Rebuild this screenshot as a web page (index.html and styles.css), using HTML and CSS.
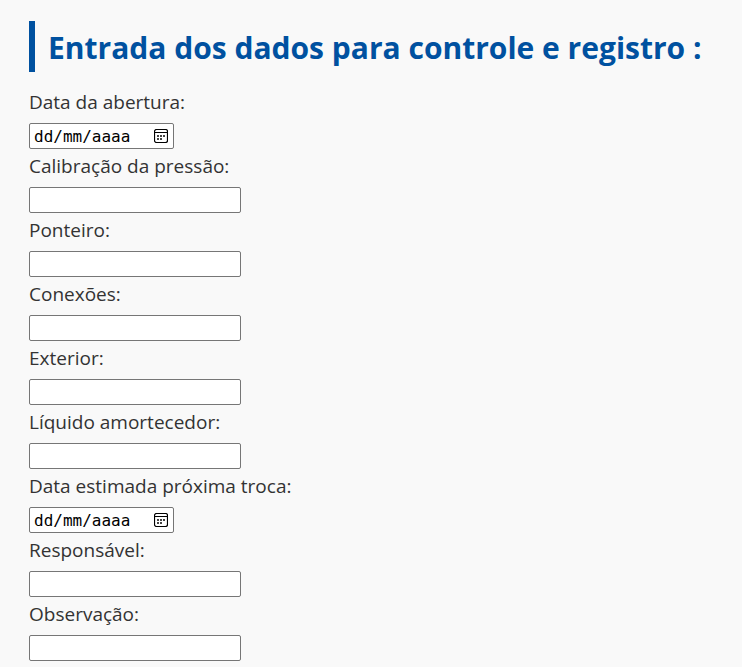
FILE: index.html
```html
<!DOCTYPE html>
<html lang="pt-BR">
<head>
<meta charset="utf-8">
<meta name="viewport" content="width=device-width, initial-scale=1">
<title>Controle e registro</title>
<link rel="stylesheet" href="styles.css">
</head>
<body>
<svg class="symbols" aria-hidden="true">
  <symbol id="calendar" viewBox="0 0 14 14">
    <rect x="0.5" y="0.5" width="13" height="13" rx="2" fill="none" stroke="currentColor" stroke-width="1.2"/>
    <path d="M1 3.5h12" stroke="currentColor"/>
    <path d="M6 6h2v2H6zM9 6h2v2H9zM3 6h2v2H3zM3 9h2v2H3zM6 9h2v2H6z" fill="#444"/>
  </symbol>
</svg>
<main class="page">
  <h1 class="title">Entrada dos dados para controle e registro :</h1>
  <form class="form">
    <div class="field">
      <label for="abertura">Data da abertura:</label>
      <div class="date">
        <input id="abertura" type="text" placeholder="dd/mm/aaaa">
        <button type="button" aria-label="Abrir calendário"><svg><use href="#calendar"/></svg></button>
      </div>
    </div>
    <div class="field"><label for="pressao">Calibração da pressão:</label><input class="text" id="pressao" type="text"></div>
    <div class="field"><label for="ponteiro">Ponteiro:</label><input class="text" id="ponteiro" type="text"></div>
    <div class="field"><label for="conexoes">Conexões:</label><input class="text" id="conexoes" type="text"></div>
    <div class="field"><label for="exterior">Exterior:</label><input class="text" id="exterior" type="text"></div>
    <div class="field"><label for="liquido">Líquido amortecedor:</label><input class="text" id="liquido" type="text"></div>
    <div class="field">
      <label for="troca">Data estimada próxima troca:</label>
      <div class="date">
        <input id="troca" type="text" placeholder="dd/mm/aaaa">
        <button type="button" aria-label="Abrir calendário"><svg><use href="#calendar"/></svg></button>
      </div>
    </div>
    <div class="field"><label for="responsavel">Responsável:</label><input class="text" id="responsavel" type="text"></div>
    <div class="field"><label for="observacao">Observação:</label><input class="text" id="observacao" type="text"></div>
  </form>
</main>
</body>
</html>
```
FILE: styles.css
```css
* {
  box-sizing: border-box;
}

body {
  margin: 0;
  background: #f9f9f9;
  color: #333;
  font: 19px/26px "Open Sans", "Noto Sans", sans-serif;
}

.symbols {
  display: none;
}

.page {
  padding: 21px 29px 0;
}

.title {
  margin: 0 0 17px;
  padding: 3px 0 0 13px;
  border-left: 6px solid #0051a0;
  color: #0051a0;
  font-size: 30px;
  line-height: 48px;
  font-weight: 700;
}

.form {
  display: flex;
  flex-direction: column;
  gap: 4px;
}

.field {
  display: flex;
  flex-direction: column;
  align-items: flex-start;
  gap: 8px;
}

.text,
.date {
  height: 26px;
  border: 1px solid #767676;
  border-radius: 2px;
  background: #fff;
}

.text {
  width: 212px;
  padding: 0 4px;
  font: inherit;
}

.date {
  display: flex;
  align-items: center;
  width: 145px;
  padding: 0 5px 0 4px;
}

.date input {
  flex: 1;
  min-width: 0;
  height: 24px;
  padding: 0;
  border: 0;
  background: none;
  color: #000;
  font: 16px "DejaVu Sans Mono", monospace;
}

.date input::placeholder {
  color: #000;
  opacity: 1;
}

.date button {
  display: flex;
  padding: 0;
  border: 0;
  background: none;
  color: #000;
}

.date svg {
  width: 14px;
  height: 14px;
}
```
